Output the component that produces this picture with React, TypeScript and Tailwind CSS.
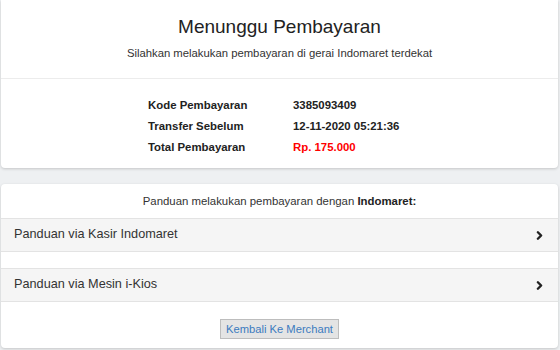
import { ChevronRight } from "lucide-react";

function GuideRow({ label }: { label: string }) {
  return (
    <div className="flex h-[34px] items-center justify-between border-y border-[#e3e3e3] bg-[#f5f5f5] pl-[13px] pr-[12px] text-[12.7px] text-[#333]">
      <span>{label}</span>
      <ChevronRight className="h-[13px] w-[13px] text-[#222]" strokeWidth={4.5} />
    </div>
  );
}

export default function App() {
  return (
    <main
      className="h-[350px] w-[560px] overflow-hidden bg-[#eef0f2] px-[1px] pt-0"
      style={{ fontFamily: '"Liberation Sans", Arial, sans-serif' }}
    >
      <section className="h-[168px] w-[557px] rounded-b-[4px] bg-white shadow-[0_1px_3px_rgba(0,0,0,0.18)]">
        <div className="flex h-[79px] flex-col items-center border-b border-[#ececec] pt-[14px]">
          <h1 className="text-[19px] leading-[26px] text-[#222]">Menunggu Pembayaran</h1>
          <p className="mt-[6px] text-[11.3px] leading-[14px] text-[#333]">
            Silahkan melakukan pembayaran di gerai Indomaret terdekat
          </p>
        </div>
        <div className="grid grid-cols-[145px_auto] gap-y-[7px] pl-[147px] pt-[19px] text-[11.4px] font-bold leading-[14px] text-[#222]">
          <span>Kode Pembayaran</span>
          <span>3385093409</span>
          <span>Transfer Sebelum</span>
          <span>12-11-2020 05:21:36</span>
          <span>Total Pembayaran</span>
          <span className="text-[#ff0000]">Rp. 175.000</span>
        </div>
      </section>

      <section className="mt-[16px] h-[164px] w-[557px] rounded-[4px] bg-white shadow-[0_1px_3px_rgba(0,0,0,0.18)]">
        <p className="pt-[10px] pb-[9px] text-center text-[11.4px] leading-[15px] text-[#333]">
          Panduan melakukan pembayaran dengan <b className="text-[#222]">Indomaret:</b>
        </p>
        <GuideRow label="Panduan via Kasir Indomaret" />
        <div className="h-[16px]" />
        <GuideRow label="Panduan via Mesin i-Kios" />
        <div className="flex justify-center pt-[17px]">
          <button className="h-[20px] w-[119px] border border-[#bdbdbd] bg-[#e4e4e4] text-[11.2px] leading-[18px] text-[#3b7bbf]">
            Kembali Ke Merchant
          </button>
        </div>
      </section>
    </main>
  );
}
